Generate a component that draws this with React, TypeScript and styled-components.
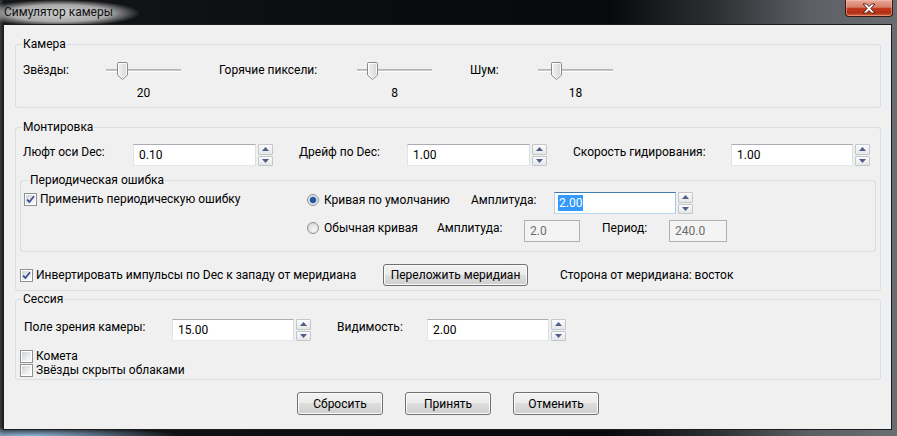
import React from 'react';
import styled, { createGlobalStyle, css } from 'styled-components';

const FONT = `"Segoe UI", Roboto, "Noto Sans", sans-serif`;

const GlobalStyle = createGlobalStyle`
  html, body { margin: 0; padding: 0; background: #000; }
  body { font-family: ${FONT}; font-size: 12px; color: #000; }
  * { box-sizing: border-box; }
`;

const Window = styled.div`
  width: 897px;
  height: 436px;
  display: flex;
  flex-direction: column;
  overflow: hidden;
  background:
    radial-gradient(ellipse 150px 9px at 30px 436px, rgba(150, 190, 225, 0.95), rgba(150, 190, 225, 0) 100%),
    linear-gradient(90deg, #3a3b3d 0px, #151618 4px, #0b0c0f 40%, #07090c 68%, #2e3134 80%, #5b5e62 90%, #6a6d71 100%);
`;

const TitleBar = styled.div`
  height: 24px;
  display: flex;
  align-items: flex-start;
  justify-content: space-between;
`;

const TitleText = styled.div`
  height: 24px;
  margin-left: -14px;
  padding: 4px 26px 4px 18px;
  line-height: 16px;
  font-size: 12px;
  color: #111;
  background: radial-gradient(ellipse at 48% 55%, rgba(215, 215, 215, 0.97) 0%, rgba(195, 195, 195, 0.85) 45%, rgba(190, 190, 190, 0) 72%);
`;

const CloseButton = styled.div`
  width: 48px;
  height: 17px;
  margin-right: 4px;
  border: 1px solid #3a1712;
  border-top: none;
  border-radius: 0 0 4px 4px;
  background: linear-gradient(#e8a898 0%, #d77d69 45%, #c23a20 52%, #b22e15 80%, #d8663e 100%);
  box-shadow: inset 0 0 0 1px rgba(255, 200, 190, 0.45);
  display: flex;
  align-items: center;
  justify-content: center;
`;

const Body = styled.div`
  flex: 1;
  display: flex;
  padding: 0 5px 6px 3px;
`;

const Client = styled.div`
  flex: 1;
  background: #f0f0f0;
  border: 1px solid #1c1c1c;
  padding: 11px 10px 0 11px;
  display: flex;
  flex-direction: column;
`;

const Group = styled.fieldset<{ $mt?: number; $mx?: number }>`
  margin: ${(p) => p.$mt ?? 0}px ${(p) => p.$mx ?? 0}px 0;
  padding: 0;
  border: 1px solid #d5dfe5;
  border-radius: 3px;
  min-width: 0;
`;

const Legend = styled.legend<{ $ml?: number }>`
  padding: 0 1px;
  margin-left: ${(p) => p.$ml ?? 6}px;
  line-height: 16px;
  font-size: 12px;
`;

const CameraBody = styled.div`
  display: flex;
  gap: 38px;
  padding: 10px 0 6px 7px;
`;

const SliderItem = styled.div`
  display: flex;
  align-items: flex-start;
`;

const Label = styled.div<{ $w?: number; $ml?: number }>`
  ${(p) => p.$w !== undefined && css`width: ${p.$w}px; flex: none;`}
  margin-left: ${(p) => p.$ml ?? 0}px;
  line-height: 16px;
  white-space: nowrap;
`;

const SliderCol = styled.div`
  width: 75px;
  display: flex;
  flex-direction: column;
  align-items: center;
`;

const Track = styled.div`
  position: relative;
  width: 75px;
  height: 18px;
  &::before {
    content: '';
    position: absolute;
    left: 0;
    right: 0;
    top: 7px;
    height: 3px;
    background: linear-gradient(#b4b4b4 0 1px, #c9c9c9 1px 2px, #fdfdfd 2px 3px);
  }
`;

const Thumb = styled.svg`
  position: absolute;
  top: 0;
  display: block;
`;

const SliderValue = styled.div`
  margin-top: 5px;
  line-height: 16px;
`;

const MountBody = styled.div`
  padding: 9px 4px 4px 4px;
  display: flex;
  flex-direction: column;
`;

const FieldRow = styled.div<{ $pl?: number }>`
  display: flex;
  align-items: flex-start;
  gap: 26px;
  padding-left: ${(p) => p.$pl ?? 3}px;
`;

const Field = styled.div`
  display: flex;
  align-items: flex-start;
`;

const TextBox = styled.div<{ $w: number; $variant?: 'normal' | 'focus' | 'disabled' }>`
  width: ${(p) => p.$w}px;
  height: 22px;
  flex: none;
  padding: 0 5px;
  display: flex;
  align-items: center;
  line-height: 16px;
  background: #fff;
  border: 1px solid;
  border-color: #abadb3 #dbdfe6 #e3e9ef #e2e3ea;
  ${(p) =>
    p.$variant === 'focus' &&
    css`
      border-color: #3d7bad #a4c9e3 #b7d9ed #b5cfe7;
      padding-left: 3px;
    `}
  ${(p) =>
    p.$variant === 'disabled' &&
    css`
      background: #f4f4f4;
      border-color: #adb2b5;
      color: #6d6d6d;
    `}
`;

const Selected = styled.span`
  background: #3399ff;
  color: #fff;
  padding: 0 1px;
`;

const SpinBox = styled.div`
  margin-left: 2px;
  width: 15px;
  height: 22px;
  display: flex;
  flex-direction: column;
  gap: 1px;
`;

const SpinButton = styled.div`
  flex: 1;
  border: 1px solid #c3c6cb;
  border-radius: 1px;
  background: linear-gradient(#fbfbfb, #e6e7e9);
  display: flex;
  align-items: center;
  justify-content: center;
`;

const SubBody = styled.div`
  display: grid;
  grid-template-columns: 283px 1fr;
  padding: 4px 0 9px 3px;
`;

const RightCol = styled.div`
  display: flex;
  flex-direction: column;
  gap: 6px;
`;

const OptRow = styled.div`
  display: flex;
  align-items: flex-start;
`;

const CheckItem = styled.label<{ $w?: number }>`
  display: flex;
  align-items: center;
  gap: 3px;
  height: 14px;
  line-height: 14px;
  white-space: nowrap;
  ${(p) => p.$w !== undefined && css`width: ${p.$w}px; flex: none;`}
`;

const CheckBox = styled.span`
  width: 13px;
  height: 13px;
  flex: none;
  border: 1px solid #8e8f8f;
  background: #fff;
  padding: 1px;
  display: flex;
`;

const CheckInner = styled.span`
  flex: 1;
  background: linear-gradient(135deg, #cdd1d6 0%, #eceef0 60%, #fbfbfb 100%);
  display: flex;
  align-items: center;
  justify-content: center;
`;

const RadioItem = styled.label<{ $w: number }>`
  width: ${(p) => p.$w}px;
  flex: none;
  display: flex;
  align-items: center;
  gap: 5px;
  height: 16px;
  line-height: 16px;
  white-space: nowrap;
`;

const Radio = styled.span<{ $on?: boolean }>`
  width: 12px;
  height: 12px;
  flex: none;
  border-radius: 50%;
  border: 1px solid #8e8f8f;
  background: ${(p) =>
    p.$on
      ? 'radial-gradient(circle, #2a6fc0 0, #144a8c 30%, #5f8fc6 45%, #e6e9ec 55%, #f7f7f7 100%)'
      : 'radial-gradient(circle at 60% 65%, #f7f7f7 0, #e2e4e7 50%, #c8ccd1 100%)'};
`;

const InvertRow = styled.div`
  margin-top: 12px;
  height: 22px;
  display: flex;
  align-items: center;
`;

const Button = styled.div<{ $w: number; $h?: number }>`
  width: ${(p) => p.$w}px;
  height: ${(p) => p.$h ?? 23}px;
  flex: none;
  border: 1px solid #707070;
  border-radius: 3px;
  background: linear-gradient(#f2f2f2 0%, #ebebeb 50%, #dddddd 50%, #cfcfcf 100%);
  box-shadow: inset 0 0 0 1px #fbfbfb;
  display: flex;
  align-items: center;
  justify-content: center;
  line-height: 16px;
`;

const SessionBody = styled.div`
  padding: 12px 4px 2px 4px;
  display: flex;
  flex-direction: column;
`;

const CheckList = styled.div`
  margin-top: 8px;
  display: flex;
  flex-direction: column;
`;

const ButtonRow = styled.div`
  margin-top: 12px;
  display: flex;
  justify-content: center;
  gap: 22px;
`;

const Arrow = ({ up }: { up?: boolean }) => (
  <svg width="7" height="4" viewBox="0 0 7 4">
    <path d={up ? 'M0 4 L3.5 0 L7 4 Z' : 'M0 0 L3.5 4 L7 0 Z'} fill="#4d5d8c" />
  </svg>
);

const Spinner = () => (
  <SpinBox>
    <SpinButton>
      <Arrow up />
    </SpinButton>
    <SpinButton>
      <Arrow />
    </SpinButton>
  </SpinBox>
);

const Check = ({ checked, children, w }: { checked?: boolean; children: React.ReactNode; w?: number }) => (
  <CheckItem $w={w}>
    <CheckBox>
      <CheckInner>
        {checked && (
          <svg width="9" height="9" viewBox="0 0 9 9">
            <path d="M1 4.6 L3.4 7 L8 1.2" stroke="#3a4f8e" strokeWidth="1.8" fill="none" />
          </svg>
        )}
      </CheckInner>
    </CheckBox>
    {children}
  </CheckItem>
);

const Slider = ({ label, labelW, value, max }: { label: string; labelW: number; value: number; max: number }) => (
  <SliderItem>
    <Label $w={labelW}>{label}</Label>
    <SliderCol>
      <Track>
        <Thumb width="11" height="18" viewBox="0 0 11 18" style={{ left: Math.round((value / max) * 64) }}>
          <defs>
            <linearGradient id="tg" x1="0" x2="1" y1="0" y2="0">
              <stop offset="0" stopColor="#f4f4f4" />
              <stop offset="1" stopColor="#d6d6d6" />
            </linearGradient>
          </defs>
          <path d="M1.5 0.5 H9.5 Q10.5 0.5 10.5 1.5 V13 L5.5 17.5 L0.5 13 V1.5 Q0.5 0.5 1.5 0.5 Z" fill="url(#tg)" stroke="#8a8a8a" />
          <path d="M1.5 1.5 H9.5 V12.6 L5.5 16.2 L1.5 12.6 Z" fill="none" stroke="#fff" strokeOpacity="0.8" />
        </Thumb>
      </Track>
      <SliderValue>{value}</SliderValue>
    </SliderCol>
  </SliderItem>
);

const NumField = ({ label, labelW, value, w = 123 }: { label: string; labelW: number; value: string; w?: number }) => (
  <Field>
    <Label $w={labelW}>{label}</Label>
    <TextBox $w={w}>{value}</TextBox>
    <Spinner />
  </Field>
);

export default function App() {
  return (
    <>
      <GlobalStyle />
      <Window>
        <TitleBar>
          <TitleText>Симулятор камеры</TitleText>
          <CloseButton>
            <svg width="14" height="11" viewBox="0 0 14 11">
              <path
                d="M1 1 H4.6 L7 3.6 L9.4 1 H13 L8.8 5.5 L13 10 H9.4 L7 7.4 L4.6 10 H1 L5.2 5.5 Z"
                fill="#fff"
                stroke="#4a1b12"
                strokeWidth="0.9"
                strokeLinejoin="round"
              />
            </svg>
          </CloseButton>
        </TitleBar>
        <Body>
          <Client>
            <Group>
              <Legend>Камера</Legend>
              <CameraBody>
                <Slider label="Звёзды:" labelW={83} value={20} max={116} />
                <Slider label="Горячие пиксели:" labelW={138} value={8} max={51} />
                <Slider label="Шум:" labelW={68} value={18} max={89} />
              </CameraBody>
            </Group>

            <Group $mt={11}>
              <Legend>Монтировка</Legend>
              <MountBody>
                <FieldRow>
                  <NumField label="Люфт оси Dec:" labelW={110} value="0.10" />
                  <NumField label="Дрейф по Dec:" labelW={108} value="1.00" />
                  <NumField label="Скорость гидирования:" labelW={158} value="1.00" w={122} />
                </FieldRow>

                <Group $mt={6}>
                  <Legend $ml={8}>Периодическая ошибка</Legend>
                  <SubBody>
                    <div>
                      <Check checked>Применить периодическую ошибку</Check>
                    </div>
                    <RightCol>
                      <OptRow>
                        <RadioItem $w={164}>
                          <Radio $on />
                          Кривая по умолчанию
                        </RadioItem>
                        <Label $w={83}>Амплитуда:</Label>
                        <TextBox $w={122} $variant="focus">
                          <Selected>2.00</Selected>
                        </TextBox>
                        <Spinner />
                      </OptRow>
                      <OptRow>
                        <RadioItem $w={130}>
                          <Radio />
                          Обычная кривая
                        </RadioItem>
                        <Label $w={87}>Амплитуда:</Label>
                        <TextBox $w={56} $variant="disabled">
                          2.0
                        </TextBox>
                        <Label $w={67} $ml={22}>
                          Период:
                        </Label>
                        <TextBox $w={58} $variant="disabled">
                          240.0
                        </TextBox>
                      </OptRow>
                    </RightCol>
                  </SubBody>
                </Group>

                <InvertRow>
                  <Check checked w={363}>
                    Инвертировать импульсы по Dec к западу от меридиана
                  </Check>
                  <Button $w={145} $h={22}>
                    Переложить меридиан
                  </Button>
                  <Label $ml={32}>Сторона от меридиана: восток</Label>
                </InvertRow>
              </MountBody>
            </Group>

            <Group>
              <Legend>Сессия</Legend>
              <SessionBody>
                <FieldRow $pl={4}>
                  <NumField label="Поле зрения камеры:" labelW={148} value="15.00" w={122} />
                  <NumField label="Видимость:" labelW={90} value="2.00" w={122} />
                </FieldRow>
                <CheckList>
                  <Check>Комета</Check>
                  <Check>Звёзды скрыты облаками</Check>
                </CheckList>
              </SessionBody>
            </Group>

            <ButtonRow>
              <Button $w={86}>Сбросить</Button>
              <Button $w={86}>Принять</Button>
              <Button $w={86}>Отменить</Button>
            </ButtonRow>
          </Client>
        </Body>
      </Window>
    </>
  );
}
